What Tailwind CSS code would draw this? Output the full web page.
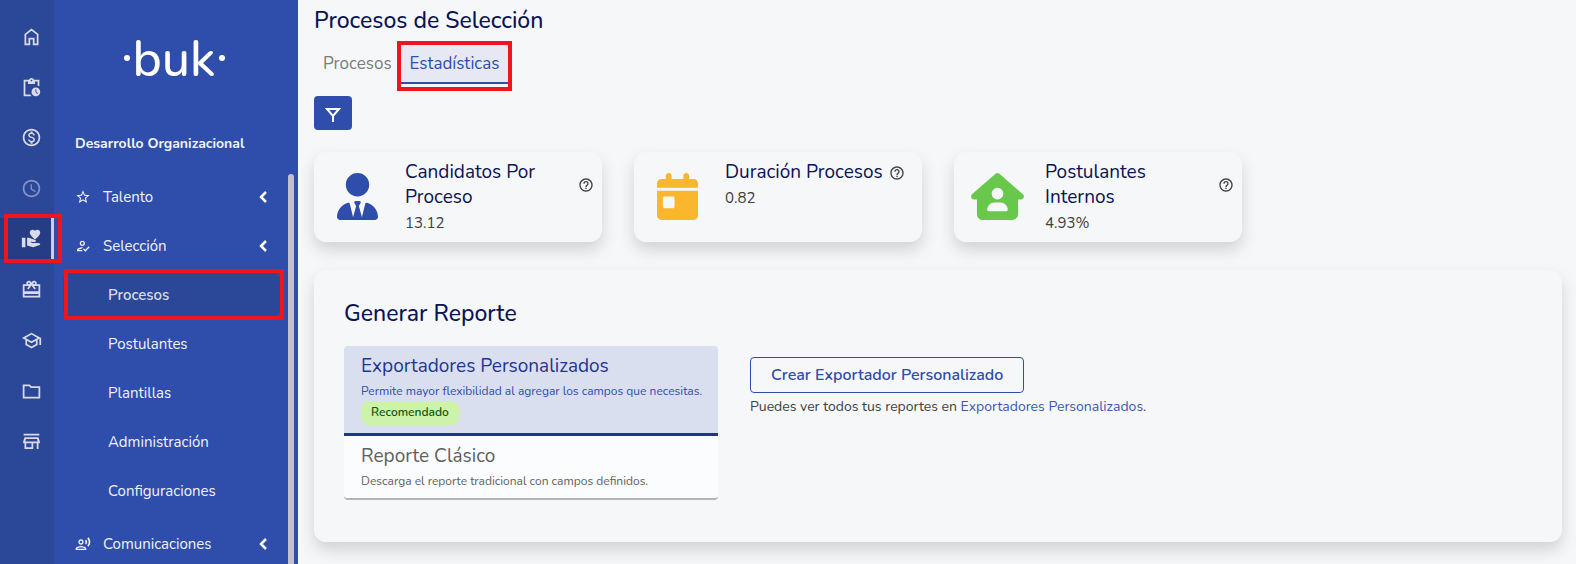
<!DOCTYPE html>
<html lang="es">
  <head>
    <meta charset="UTF-8" />
    <meta name="viewport" content="width=device-width, initial-scale=1.0" />
    <title>Procesos de Selección</title>
    <script src="https://cdn.jsdelivr.net/npm/@tailwindcss/browser@4"></script>
  </head>

  <body class="bg-[#f6f7f9] font-['Nunito','Lato',sans-serif] text-[15px] leading-6 text-[#3f3f3f]">
    <div class="flex h-screen overflow-hidden">
      <!-- Icon rail -->
      <nav aria-label="Módulos" class="w-[54px] shrink-0 bg-[#2b4798] pt-4 text-[#d9dce6]">
        <ul class="flex flex-col gap-[10px]">
          <li>
            <a href="#" aria-label="Inicio" class="flex h-[41px] items-center justify-center pl-2">
              <svg class="size-[21px]" viewBox="0 0 24 24" fill="none" stroke="currentColor" stroke-width="2"><path d="M5 21h4.500v-6.500h5V21H19V9.500L12 4 5 9.500z" /></svg>
            </a>
          </li>
          <li>
            <a href="#" aria-label="Pendientes" class="flex h-10 items-center justify-center pl-2">
              <svg class="size-[21px]" viewBox="0 0 24 24" fill="currentColor"><path d="M17 12c-2.760 0-5 2.240-5 5s2.240 5 5 5 5-2.240 5-5-2.240-5-5-5zm1.650 7.350L16.500 17.200V14h1v2.790l1.850 1.850-.7.710zM20 3h-5.180C14.400 1.840 13.300 1 12 1s-2.400.840-2.820 2H3v19h9.110a6.743 6.743 0 0 1-1.420-2H5V5h3v3h8V5h3v5.080c.710.100 1.380.310 2 .600V3zm-8 2c-.550 0-1-.450-1-1s.450-1 1-1 1 .450 1 1-.450 1-1 1z" /></svg>
            </a>
          </li>
          <li>
            <a href="#" aria-label="Remuneraciones" class="flex h-[41px] items-center justify-center pl-2">
              <svg class="size-[21px]" viewBox="0 0 24 24" fill="currentColor"><path d="M12 2C6.480 2 2 6.480 2 12s4.480 10 10 10 10-4.480 10-10S17.520 2 12 2zm0 18c-4.410 0-8-3.590-8-8s3.590-8 8-8 8 3.590 8 8-3.590 8-8 8zm.310-8.860c-1.770-.450-2.340-.940-2.340-1.670 0-.840.790-1.430 2.100-1.430 1.380 0 1.900.660 1.940 1.640h1.710c-.050-1.340-.870-2.570-2.490-2.970V5H10.900v1.690c-1.510.320-2.720 1.300-2.720 2.810 0 1.790 1.490 2.690 3.660 3.210 1.950.460 2.340 1.150 2.340 1.870 0 .530-.390 1.390-2.100 1.390-1.600 0-2.230-.720-2.320-1.640H8.040c.100 1.700 1.360 2.660 2.860 2.970V19h2.340v-1.670c1.520-.290 2.720-1.160 2.730-2.770-.010-2.200-1.900-2.960-3.660-3.420z" /></svg>
            </a>
          </li>
          <li>
            <a href="#" aria-label="Asistencia" class="flex h-10 items-center justify-center pl-2 text-[#8594c4]">
              <svg class="size-[21px]" viewBox="0 0 24 24" fill="currentColor"><path d="M11.990 2C6.470 2 2 6.480 2 12s4.470 10 9.990 10C17.520 22 22 17.520 22 12S17.520 2 11.990 2zM12 20c-4.420 0-8-3.580-8-8s3.580-8 8-8 8 3.580 8 8-3.580 8-8 8zm.500-13H11v6l5.250 3.150.750-1.230-4.500-2.670z" /></svg>
            </a>
          </li>
          <li class="relative">
            <a href="#" aria-label="Desarrollo Organizacional" class="flex h-[41px] items-center justify-center border-r-[3px] border-[#ccd0db] bg-[#263d85] pl-[11px]">
              <svg class="size-[21px]" viewBox="0 0 24 24" fill="currentColor"><path d="M1 11h4v11H1zM16 3.250C16.650 2.490 17.660 2 18.700 2 20.550 2 22 3.450 22 5.300c0 2.270-2.910 4.900-6 7.700-3.090-2.810-6-5.440-6-7.700C10 3.450 11.450 2 13.300 2c1.040 0 2.050.490 2.700 1.250zM20 17h-7l-2.090-.730.330-.940L13 16h2.820c.650 0 1.180-.530 1.180-1.180 0-.490-.310-.930-.770-1.110L8.970 11H7v9.020L14 22l8.010-3c-.010-1.100-.900-2-2.010-2z" /></svg>
            </a>
            <span class="pointer-events-none absolute -inset-y-1 left-1 z-10 w-[58px] border-4 border-[#f0141e]"></span>
          </li>
          <li>
            <a href="#" aria-label="Beneficios" class="flex h-[41px] items-center justify-center pl-2">
              <svg class="size-[21px]" viewBox="0 0 24 24" fill="currentColor"><path d="M22 6h-4.180c.110-.310.180-.650.180-1 0-1.660-1.340-3-3-3-1.050 0-1.960.540-2.500 1.350l-.500.670-.500-.680C10.960 2.540 10.050 2 9 2 7.340 2 6 3.340 6 5c0 .350.070.690.180 1H2v15h20V6zm-7-2c.550 0 1 .450 1 1s-.450 1-1 1-1-.450-1-1 .450-1 1-1zM9 4c.550 0 1 .450 1 1s-.450 1-1 1-1-.450-1-1 .450-1 1-1zm11 15H4v-2h16v2zm0-5H4V8h5.080L7 10.830 8.620 12 12 7.400l3.380 4.600L17 10.830 14.920 8H20v6z" /></svg>
            </a>
          </li>
          <li>
            <a href="#" aria-label="Capacitación" class="flex h-[41px] items-center justify-center pl-2">
              <svg class="size-[21px]" viewBox="0 0 24 24" fill="currentColor"><path d="M12 3 1 9l4 2.180v6L12 21l7-3.820v-6l2-1.090V17h2V9L12 3zm6.820 6L12 12.720 5.180 9 12 5.280 18.820 9zM17 15.990l-5 2.730-5-2.730v-3.720L12 15l5-2.730v3.720z" /></svg>
            </a>
          </li>
          <li>
            <a href="#" aria-label="Documentos" class="flex h-10 items-center justify-center pl-2">
              <svg class="size-[21px]" viewBox="0 0 24 24" fill="currentColor"><path d="m9.170 6 2 2H20v10H4V6h5.170M10 4H2v16h20V6H12l-2-2z" /></svg>
            </a>
          </li>
          <li>
            <a href="#" aria-label="Empresa" class="flex h-[41px] items-center justify-center pl-2">
              <svg class="size-[21px]" viewBox="0 0 24 24" fill="currentColor"><path d="M18.360 9l.600 3H5.040l.600-3h12.720M21 3H3v2h18V3zm-1 4H4l-1.500 5v2H4v6.500h10V14h4v6.500h2V14h1.500v-2L20 7zM6 18.500V14h6v4.500H6z" /></svg>
            </a>
          </li>
        </ul>
      </nav>

      <!-- Sidebar -->
      <aside class="flex w-[244px] shrink-0 flex-col bg-[#2f4daa] text-[#f1f3f9]">
        <div class="flex h-[116px] items-center justify-center pr-1 text-white">
          <span class="size-[6px] rounded-full bg-white"></span>
          <span class="mx-[3px] pt-1 text-[50px] leading-none font-medium">buk</span>
          <span class="size-[6px] rounded-full bg-white"></span>
        </div>
        <h2 class="h-[58px] pt-4 pl-[21px] text-[14px] font-bold">Desarrollo Organizacional</h2>

        <div class="flex min-h-0 flex-1">
          <ul class="w-[234px]">
            <li>
              <button type="button" class="flex h-[45px] w-full items-center pl-[21px] text-left">
                <svg class="mr-3 size-4" viewBox="0 0 24 24" fill="currentColor"><path d="m22 9.240-7.190-.620L12 2 9.190 8.630 2 9.240l5.460 4.730L5.820 21 12 17.270 18.180 21l-1.630-7.030L22 9.240zM12 15.400l-3.760 2.270 1-4.280-3.320-2.880 4.380-.380L12 6.100l1.710 4.040 4.380.380-3.320 2.880 1 4.280L12 15.400z" /></svg>
                <span class="flex-1">Talento</span>
                <svg class="mr-5 h-[14px] w-[10px]" viewBox="0 0 10 14" fill="none" stroke="white" stroke-width="2.500"><path d="M8 2 3 7l5 5" /></svg>
              </button>
            </li>
            <li class="mt-1">
              <button type="button" class="flex h-[45px] w-full items-center pl-[21px] text-left">
                <svg class="mr-3 size-4" viewBox="0 0 24 24" fill="currentColor"><path d="M11 12c2.210 0 4-1.790 4-4s-1.790-4-4-4-4 1.790-4 4 1.790 4 4 4zm0-6c1.100 0 2 .900 2 2s-.900 2-2 2-2-.900-2-2 .900-2 2-2zm-6 12c.200-.630 2.570-1.680 4.960-1.940l2.040-2c-.390-.040-.680-.060-1-.060-2.670 0-8 1.340-8 4v2h9l-2-2H5zm15.600-5.500-5.130 5.170-2.070-2.080L12 17l3.470 3.500L22 13.910z" /></svg>
                <span class="flex-1">Selección</span>
                <svg class="mr-5 h-[14px] w-[10px]" viewBox="0 0 10 14" fill="none" stroke="white" stroke-width="2.500"><path d="M8 2 3 7l5 5" /></svg>
              </button>
              <ul class="mt-1 flex flex-col gap-1 pr-2 pl-[9px]">
                <li class="relative">
                  <a href="#" class="flex h-[45px] items-center rounded-lg bg-[#2b4798] pl-[45px] font-semibold text-[#d9dce6]">Procesos</a>
                  <span class="pointer-events-none absolute -inset-y-[3px] -right-1 left-px border-4 border-[#f0141e]"></span>
                </li>
                <li><a href="#" class="flex h-[45px] items-center pl-[45px]">Postulantes</a></li>
                <li><a href="#" class="flex h-[45px] items-center pl-[45px]">Plantillas</a></li>
                <li><a href="#" class="flex h-[45px] items-center pl-[45px]">Administración</a></li>
                <li><a href="#" class="flex h-[45px] items-center pl-[45px]">Configuraciones</a></li>
              </ul>
            </li>
            <li class="mt-2">
              <button type="button" class="flex h-[45px] w-full items-center pl-[21px] text-left">
                <svg class="mr-3 size-4" viewBox="0 0 24 24" fill="currentColor"><path d="M9 13c2.210 0 4-1.790 4-4s-1.790-4-4-4-4 1.790-4 4 1.790 4 4 4zm0-6c1.100 0 2 .900 2 2s-.900 2-2 2-2-.900-2-2 .900-2 2-2zm0 8c-2.670 0-8 1.340-8 4v2h16v-2c0-2.660-5.330-4-8-4zm-6 4c.220-.720 3.310-2 6-2 2.700 0 5.800 1.290 6 2H3zM15.080 7.050c.840 1.180.840 2.710 0 3.890l1.680 1.690c2.020-2.020 2.020-5.070 0-7.270l-1.680 1.690zM20.070 2l-1.630 1.630c2.770 3.020 2.770 7.560 0 10.740L20.070 16c3.900-3.890 3.910-9.950 0-14z" /></svg>
                <span class="flex-1">Comunicaciones</span>
                <svg class="mr-5 h-[14px] w-[10px]" viewBox="0 0 10 14" fill="none" stroke="white" stroke-width="2.500"><path d="M8 2 3 7l5 5" /></svg>
              </button>
            </li>
          </ul>
          <!-- Scrollbar -->
          <div class="w-[6px] shrink-0 rounded-t-full bg-[#c1c2c4]"></div>
        </div>
      </aside>

      <!-- Main content -->
      <main class="min-w-0 flex-1 pr-[14px] pl-4">
        <h1 class="h-[45px] pt-[5px] text-[23px] leading-8 font-medium text-[#0b1354]">Procesos de Selección</h1>

        <div role="tablist" class="flex text-[17px]">
          <button type="button" role="tab" class="h-[39px] border-b-2 border-transparent px-[9px] text-[#7b7b7b]">Procesos</button>
          <div class="relative">
            <button type="button" role="tab" aria-selected="true" class="h-[39px] border-b-2 border-[#2f4daa] bg-[#e6e9f3] px-[9px] text-[#2f4daa]">Estadísticas</button>
            <span class="pointer-events-none absolute -inset-x-1 -top-1 -bottom-[7px] border-4 border-[#f0141e]"></span>
          </div>
        </div>

        <button type="button" aria-label="Filtrar" class="mt-3 flex h-[34px] w-[38px] items-center justify-center rounded bg-[#2f4daa] text-white">
          <svg class="mt-1 size-4" viewBox="0 0 16 16" fill="none" stroke="currentColor" stroke-width="2"><path d="M2 2h12L8 9zM8 8v7" /></svg>
        </button>

        <!-- Indicators -->
        <section class="mt-[22px] grid grid-cols-4 gap-8">
          <article class="flex h-[90px] rounded-xl bg-[#f6f7f9] pr-2 shadow-[0_8px_16px_rgba(0,0,0,0.15)]">
            <div class="flex w-[91px] shrink-0 items-center justify-center pr-1 pb-[2px]">
              <svg class="h-[47px] w-[41px]" viewBox="0 0 448 512" fill="#2f4daa"><path d="M96 128a128 128 0 1 0 256 0A128 128 0 1 0 96 128zm94.500 200.200l18.600 31L175.800 483.100l-36-146.900c-2-8.100-9.800-13.400-17.900-11.300C51.900 342.400 0 405.800 0 481.300c0 17 13.800 30.700 30.700 30.700H417.300c17 0 30.700-13.800 30.700-30.700c0-75.500-51.900-138.900-121.900-156.400c-8.100-2-15.900 3.300-17.900 11.300l-36 146.900L238.900 359.200l18.600-31c6.400-10.700-1.300-24.200-13.700-24.200H204.300c-12.400 0-20.100 13.600-13.700 24.200z" /></svg>
            </div>
            <div class="flex-1 pt-2">
              <div class="flex items-center gap-[6px]">
                <h3 class="text-[19px] leading-[25px] text-[#0b1354]">Candidatos Por Proceso</h3>
                <svg class="size-4 shrink-0" viewBox="0 0 24 24" fill="currentColor"><path d="M11 18h2v-2h-2v2zm1-16C6.480 2 2 6.480 2 12s4.480 10 10 10 10-4.480 10-10S17.520 2 12 2zm0 18c-4.410 0-8-3.590-8-8s3.590-8 8-8 8 3.590 8 8-3.590 8-8 8zm0-14c-2.210 0-4 1.790-4 4h2c0-1.100.900-2 2-2s2 .900 2 2c0 2-3 1.750-3 5h2c0-2.250 3-2.500 3-5 0-2.210-1.790-4-4-4z" /></svg>
              </div>
              <p class="mt-px">13.12</p>
            </div>
          </article>

          <article class="flex h-[90px] rounded-xl bg-[#f6f7f9] pr-2 shadow-[0_8px_16px_rgba(0,0,0,0.15)]">
            <div class="flex w-[91px] shrink-0 items-center justify-center pr-1 pb-[2px]">
              <svg class="h-[47px] w-[41px]" viewBox="0 0 448 512" fill="#fab62d"><path d="M128 0c17.700 0 32 14.300 32 32V64H288V32c0-17.700 14.300-32 32-32s32 14.300 32 32V64h48c26.500 0 48 21.500 48 48v48H0V112C0 85.500 21.500 64 48 64H96V32c0-17.700 14.300-32 32-32zM0 192H448V464c0 26.500-21.500 48-48 48H48c-26.500 0-48-21.500-48-48V192zm80 64c-8.800 0-16 7.200-16 16v96c0 8.800 7.200 16 16 16h96c8.800 0 16-7.200 16-16V272c0-8.800-7.200-16-16-16H80z" /></svg>
            </div>
            <div class="flex-1 pt-2">
              <div class="flex items-center gap-[6px]">
                <h3 class="text-[19px] leading-[25px] text-[#0b1354]">Duración Procesos</h3>
                <svg class="size-4 shrink-0" viewBox="0 0 24 24" fill="currentColor"><path d="M11 18h2v-2h-2v2zm1-16C6.480 2 2 6.480 2 12s4.480 10 10 10 10-4.480 10-10S17.520 2 12 2zm0 18c-4.410 0-8-3.590-8-8s3.590-8 8-8 8 3.590 8 8-3.590 8-8 8zm0-14c-2.210 0-4 1.790-4 4h2c0-1.100.900-2 2-2s2 .900 2 2c0 2-3 1.750-3 5h2c0-2.250 3-2.500 3-5 0-2.210-1.790-4-4-4z" /></svg>
              </div>
              <p class="mt-px">0.82</p>
            </div>
          </article>

          <article class="flex h-[90px] rounded-xl bg-[#f6f7f9] pr-2 shadow-[0_8px_16px_rgba(0,0,0,0.15)]">
            <div class="flex w-[91px] shrink-0 items-center justify-center pr-1 pb-[2px]">
              <svg class="h-[47px] w-[53px]" viewBox="0 0 576 512" fill="#69c84b"><path d="M575.800 255.500c0 18-15 32.100-32 32.100h-32l.700 160.200c.200 35.500-28.500 64.300-64 64.300H128.100c-35.300 0-64-28.700-64-64V287.600H32c-18 0-32-14-32-32.100c0-9 3-17 10-24L266.400 8c7-7 15-8 22-8s15 2 21 7L564.800 231.500c8 7 12 15 11 24zM352 224a64 64 0 1 0 -128 0 64 64 0 1 0 128 0zm-96 96c-44.200 0-80 35.800-80 80c0 8.800 7.200 16 16 16H384c8.800 0 16-7.200 16-16c0-44.200-35.800-80-80-80H256z" /></svg>
            </div>
            <div class="flex-1 pt-2">
              <div class="flex items-center gap-[6px]">
                <h3 class="text-[19px] leading-[25px] text-[#0b1354]">Postulantes Internos</h3>
                <svg class="size-4 shrink-0" viewBox="0 0 24 24" fill="currentColor"><path d="M11 18h2v-2h-2v2zm1-16C6.480 2 2 6.480 2 12s4.480 10 10 10 10-4.480 10-10S17.520 2 12 2zm0 18c-4.410 0-8-3.590-8-8s3.590-8 8-8 8 3.590 8 8-3.590 8-8 8zm0-14c-2.210 0-4 1.790-4 4h2c0-1.100.900-2 2-2s2 .900 2 2c0 2-3 1.750-3 5h2c0-2.250 3-2.500 3-5 0-2.210-1.790-4-4-4z" /></svg>
              </div>
              <p class="mt-px">4.93%</p>
            </div>
          </article>
        </section>

        <!-- Report -->
        <section class="mt-7 rounded-xl bg-[#f6f7f9] px-[30px] pt-7 pb-[42px] shadow-[0_8px_16px_rgba(0,0,0,0.15)]">
          <h2 class="text-[23px] leading-8 font-medium text-[#0b1354]">Generar Reporte</h2>
          <div class="mt-4 flex gap-8">
            <div role="tablist" class="w-[374px] shrink-0">
              <button type="button" role="tab" aria-selected="true" class="block w-full rounded-t border-b-[3px] border-[#1f3691] bg-[#d9dfef] py-2 pl-[17px] text-left text-[#1f3691]">
                <span class="block text-[19px] leading-[25px]">Exportadores Personalizados</span>
                <span class="mt-[2px] block text-[12px] leading-5 text-[#2f4daa]">Permite mayor flexibilidad al agregar los campos que necesitas.</span>
                <span class="block w-fit rounded-lg bg-[#cdf3ab] px-[10px] pb-[2px] text-[12px] leading-[22px] font-semibold text-[#10570f]">Recomendado</span>
              </button>
              <button type="button" role="tab" class="block w-full rounded-b border-b-2 border-[#b3b4b6] bg-[#fbfcfd] pt-2 pb-[7px] pl-[17px] text-left text-[#5f6060]">
                <span class="block text-[19px] leading-[25px]">Reporte Clásico</span>
                <span class="mt-[2px] block text-[12px] leading-5">Descarga el reporte tradicional con campos definidos.</span>
              </button>
            </div>
            <div class="pt-[11px]">
              <button type="button" class="h-9 rounded border border-[#2f4daa] px-5 text-[16px] font-semibold text-[#2f4daa]">Crear Exportador Personalizado</button>
              <p class="mt-[2px] text-[14px]">Puedes ver todos tus reportes en <a href="#" class="text-[#3c58b0]">Exportadores Personalizados</a>.</p>
            </div>
          </div>
        </section>
      </main>
    </div>
  </body>
</html>
